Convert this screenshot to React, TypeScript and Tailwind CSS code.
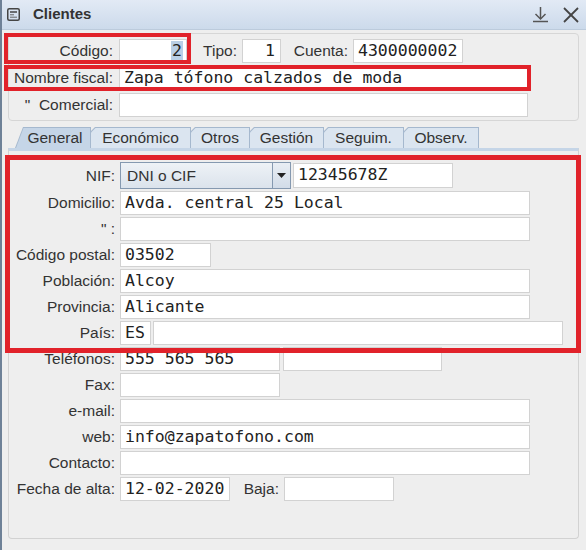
import React from "react";

const LBL = "font-['Liberation_Sans',Arial,sans-serif] text-[15.5px] text-[#333333] leading-none whitespace-nowrap";
const MONO = "font-['DejaVu_Sans_Mono',monospace] text-[16.5px] text-[#222222] leading-none whitespace-nowrap";

function Field({ w, value, right, h = "h-[24px]", children }: { w: string; value?: string; right?: boolean; h?: string; children?: React.ReactNode }) {
  return (
    <div className={`${w} ${h} shrink-0 bg-white border border-[#d2d2d2] flex items-center ${right ? "justify-end pr-[3px]" : "pl-[4px]"} ${MONO}`}>
      {children ?? value}
    </div>
  );
}

function Row({ label, children, h = "h-[24px]" }: { label: string; children: React.ReactNode; h?: string }) {
  return (
    <div className={`flex items-center ${h}`}>
      <div className={`w-[106px] text-right ${LBL}`}>{label}</div>
      <div className="ml-[5px] flex items-center">{children}</div>
    </div>
  );
}

function Tab({ label, w, selected, first }: { label: string; w: string; selected?: boolean; first?: boolean }) {
  const clipOuter = first
    ? "[clip-path:polygon(8px_0,100%_0,100%_100%,0_100%)]"
    : "[clip-path:polygon(5px_0,100%_0,100%_100%,0_100%,0_5px)]";
  const clipInner = first
    ? "[clip-path:polygon(7.5px_0,100%_0,100%_100%,0_100%)]"
    : "[clip-path:polygon(4.5px_0,100%_0,100%_100%,0_100%,0_4.5px)]";
  return (
    <div className={`relative h-[21px] ${w} -ml-[1px] first:ml-0 bg-[#a5b8ce] ${clipOuter}`}>
      <div
        className={`absolute left-[1px] top-[1px] right-[1px] bottom-0 flex items-center justify-center ${clipInner} ${
          selected ? "bg-[#c5d5e7]" : "bg-[#dbe5f0]"
        } ${LBL}`}
      >
        <span className={first ? "pl-[4px]" : ""}>{label}</span>
      </div>
    </div>
  );
}

export default function App() {
  return (
    <div className="relative w-[586px] h-[550px] bg-[#eeeeee] border-l-2 border-[#6e8197] overflow-hidden">
      {/* Title bar */}
      <div className="h-[30px] flex items-center bg-linear-to-b from-[#e2eaf5] to-[#ccdaeb] border-b border-[#bccbdc]">
        <svg className="ml-[5px]" width="13" height="13" viewBox="0 0 13 13" fill="none">
          <rect x="0.75" y="0.75" width="11.5" height="11.5" rx="1.5" stroke="#454545" strokeWidth="1.5" />
          <line x1="3" y1="4" x2="10" y2="4" stroke="#454545" strokeWidth="1.5" />
          <line x1="3" y1="6.8" x2="7" y2="6.8" stroke="#666" strokeWidth="1" />
          <line x1="3" y1="9.2" x2="10" y2="9.2" stroke="#666" strokeWidth="1" />
        </svg>
        <div className="ml-[13px] font-['Liberation_Sans',Arial,sans-serif] font-bold text-[15px] text-[#333]">Clientes</div>
        <div className="ml-auto flex items-center gap-[13px] mr-[6px]">
          <svg width="17" height="17" viewBox="0 0 17 17" fill="none" stroke="#555" strokeWidth="1.5">
            <line x1="8.5" y1="1" x2="8.5" y2="13" />
            <polyline points="3.5,8 8.5,13 13.5,8" />
            <line x1="1" y1="15.5" x2="16" y2="15.5" />
          </svg>
          <svg width="18" height="18" viewBox="0 0 18 18" fill="none" stroke="#444" strokeWidth="1.8">
            <line x1="2" y1="2" x2="16" y2="16" />
            <line x1="16" y1="2" x2="2" y2="16" />
          </svg>
        </div>
      </div>

      {/* Top panel */}
      <div className="ml-[6px] mt-[3px] w-[571px] rounded-[4px] border border-[#d6d6d6] pt-[5px] pb-[3px] flex flex-col gap-[3px]">
        <div className="flex items-center h-[24px]">
          <div className={`w-[104px] text-right ${LBL}`}>Código:</div>
          <div className="ml-[6px]">
            <Field w="w-[68px]" right>
              <span className="bg-[#b9cfe6] px-[1px] py-[2px]">2</span>
            </Field>
          </div>
          <div className={`w-[50px] text-right ${LBL}`}>Tipo:</div>
          <div className="ml-[5px]">
            <Field w="w-[39px]" right>
              <span className="pr-[2px]">1</span>
            </Field>
          </div>
          <div className={`w-[67px] text-right ${LBL}`}>Cuenta:</div>
          <div className="ml-[5px]">
            <Field w="w-[110px]" value="4300000002" />
          </div>
        </div>
        <div className="flex items-center h-[24px]">
          <div className={`w-[104px] text-right ${LBL}`}>Nombre fiscal:</div>
          <div className="ml-[6px]">
            <Field w="w-[409px]" value="Zapa tófono calzados de moda" />
          </div>
        </div>
        <div className="flex items-center h-[24px]">
          <div className={`w-[104px] text-right ${LBL}`}>"&nbsp;&nbsp;Comercial:</div>
          <div className="ml-[6px]">
            <Field w="w-[409px]" value="" />
          </div>
        </div>
      </div>

      {/* Tabs */}
      <div className="mt-[6px] ml-[13px] flex items-end">
        <Tab label="General" w="w-[76px]" selected first />
        <Tab label="Económico" w="w-[101px]" />
        <Tab label="Otros" w="w-[60px]" />
        <Tab label="Gestión" w="w-[75px]" />
        <Tab label="Seguim." w="w-[81px]" />
        <Tab label="Observ." w="w-[76px]" />
      </div>

      {/* Tab content */}
      <div className="ml-[6px] w-[571px] h-[391px] border-t-[3px] border-t-[#c5d5e7] border-x border-b border-x-[#d2d2d2] border-b-[#d2d2d2] rounded-b-[4px] pt-[11px] flex flex-col gap-[2px]">
        <Row label="NIF:" h="h-[27px]">
          <div className="w-[171px] h-[27px] border border-[#8599b0] bg-linear-to-b from-[#eef2f6] to-[#dbe3ec] flex items-center">
            <div className={`flex-1 pl-[6px] ${LBL} text-[#222]`}>DNI o CIF</div>
            <div className="w-[18px] h-full border-l border-[#8599b0] bg-linear-to-b from-[#e9eef4] to-[#d2dce8] flex items-center justify-center">
              <svg width="9" height="5" viewBox="0 0 9 5">
                <polygon points="0,0 9,0 4.5,5" fill="#222" />
              </svg>
            </div>
          </div>
          <div className="ml-[2px]">
            <Field w="w-[160px]" h="h-[25px]" value="12345678Z" />
          </div>
        </Row>
        <Row label="Domicilio:">
          <Field w="w-[410px]" value="Avda. central 25 Local" />
        </Row>
        <Row label={'" :'}>
          <Field w="w-[410px]" value="" />
        </Row>
        <Row label="Código postal:">
          <Field w="w-[91px]" value="03502" />
        </Row>
        <Row label="Población:">
          <Field w="w-[410px]" value="Alcoy" />
        </Row>
        <Row label="Provincia:">
          <Field w="w-[410px]" value="Alicante" />
        </Row>
        <Row label="País:">
          <Field w="w-[31px]" value="ES" />
          <div className="ml-[2px]">
            <Field w="w-[410px]" value="" />
          </div>
        </Row>
        <Row label="Teléfonos:">
          <Field w="w-[160px]" value="555 565 565" />
          <div className="ml-[3px]">
            <Field w="w-[159px]" value="" />
          </div>
        </Row>
        <Row label="Fax:">
          <Field w="w-[160px]" value="" />
        </Row>
        <Row label="e-mail:">
          <Field w="w-[410px]" value="" />
        </Row>
        <Row label="web:">
          <Field w="w-[410px]" value="info@zapatofono.com" />
        </Row>
        <Row label="Contacto:">
          <Field w="w-[410px]" value="" />
        </Row>
        <Row label="Fecha de alta:">
          <Field w="w-[110px]" value="12-02-2020" />
          <div className={`w-[49px] text-right ${LBL}`}>Baja:</div>
          <div className="ml-[5px]">
            <Field w="w-[110px]" value="" />
          </div>
        </Row>
      </div>

      {/* Red annotation boxes */}
      <div className="absolute left-[2px] top-[33px] w-[187px] h-[31px] border-4 border-[#e1222a]" />
      <div className="absolute left-[2px] top-[65px] w-[527px] h-[26px] border-4 border-[#e1222a]" />
      <div className="absolute left-[3px] top-[155px] w-[576px] h-[198px] border-[5px] border-[#e1222a]" />
    </div>
  );
}
